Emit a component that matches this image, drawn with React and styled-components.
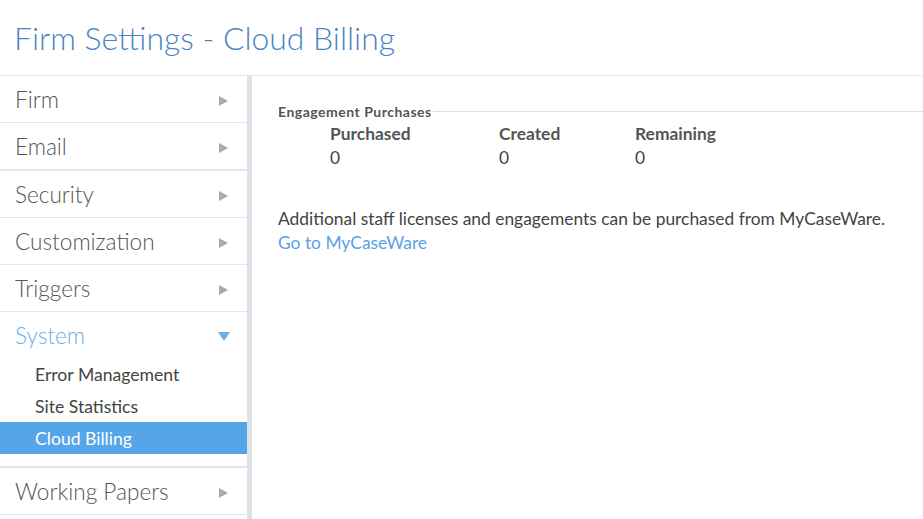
import React from 'react';
import styled, { createGlobalStyle } from 'styled-components';

const GlobalStyle = createGlobalStyle`
  html, body {
    margin: 0;
    padding: 0;
    background: #fff;
    font-family: Lato, "Open Sans", sans-serif;
    overflow: hidden;
  }
`;

const Page = styled.div`
  width: 923px;
  height: 519px;
  display: flex;
  flex-direction: column;
`;

const Header = styled.header`
  height: 76px;
  border-bottom: 1px solid #e3e6ea;
  display: flex;
  align-items: center;
  padding-left: 14px;
  box-sizing: border-box;
  flex-shrink: 0;
`;

const Title = styled.h1`
  margin: 0;
  font-weight: 300;
  font-size: 31.9px;
  color: #4a84c4;
`;

const Body = styled.div`
  flex: 1;
  display: flex;
  min-height: 0;
`;

const Sidebar = styled.nav`
  width: 247px;
  border-right: 5px solid #dde2e8;
  flex-shrink: 0;
`;

const NavRow = styled.div`
  height: 46px;
  border-bottom: ${(p) => (p.$thick ? 2 : 1)}px solid #e2e6ea;
  display: flex;
  align-items: center;
  justify-content: space-between;
  padding: 0 19px 0 15px;
  font-size: 22.6px;
  font-weight: 300;
  color: ${(p) => (p.$open ? '#6aaee8' : '#555')};
`;

const Arrow = styled.span`
  width: 0;
  height: 0;
  border-top: 5px solid transparent;
  border-bottom: 5px solid transparent;
  border-left: 9px solid #aaa;
  margin-top: 3px;
`;

const DownArrow = styled.span`
  width: 0;
  height: 0;
  border-left: 6px solid transparent;
  border-right: 6px solid transparent;
  border-top: 9px solid #6aaee8;
  margin: 3px -2px 0 0;
`;

const SystemGroup = styled.div`
  border-bottom: 2px solid #e2e6ea;
  padding-bottom: 12px;
`;

const SystemHead = styled(NavRow)`
  border-bottom: none;
`;

const SubItem = styled.div`
  height: 32px;
  display: flex;
  align-items: center;
  padding-left: 35px;
  font-size: 17.6px;
  color: ${(p) => (p.$active ? '#fff' : '#444')};
  background: ${(p) => (p.$active ? '#55a5e8' : 'transparent')};
`;

const Content = styled.main`
  flex: 1;
  padding: 27px 0 0 26px;
  color: #444;
`;

const Fieldset = styled.fieldset`
  margin: 0;
  padding: 0 0 0 52px;
  border: none;
  border-top: 1px solid #dcdfe3;
  min-width: 0;
`;

const Legend = styled.legend`
  padding: 0 1px 0 0;
  margin-left: -52px;
  font-size: 14px;
  letter-spacing: 0.5px;
  font-weight: 700;
  color: #555;
`;

const Stats = styled.div`
  display: flex;
  margin-top: 2px;
`;

const Stat = styled.div`
  width: ${(p) => p.$w}px;
  font-size: 17.4px;
  line-height: 24px;
`;

const StatLabel = styled.div`
  font-weight: 700;
  color: #555;
`;

const Note = styled.p`
  margin: 37px 0 0;
  font-size: 17.4px;
  line-height: 24px;
  color: #444;
`;

const Link = styled.a`
  color: #5ba0e6;
  text-decoration: none;
`;

const items = ['Firm', 'Email', 'Security', 'Customization', 'Triggers'];

export default function App() {
  return (
    <>
      <GlobalStyle />
      <Page>
        <Header>
          <Title>Firm Settings - Cloud Billing</Title>
        </Header>
        <Body>
          <Sidebar>
            {items.map((it) => (
              <NavRow key={it} $thick={it === 'Email'}>
                {it}
                <Arrow />
              </NavRow>
            ))}
            <SystemGroup>
              <SystemHead $open>
                System
                <DownArrow />
              </SystemHead>
              <SubItem>Error Management</SubItem>
              <SubItem>Site Statistics</SubItem>
              <SubItem $active>Cloud Billing</SubItem>
            </SystemGroup>
            <NavRow>
              Working Papers
              <Arrow />
            </NavRow>
          </Sidebar>
          <Content>
            <Fieldset>
              <Legend>Engagement Purchases</Legend>
              <Stats>
                <Stat $w={169}>
                  <StatLabel>Purchased</StatLabel>0
                </Stat>
                <Stat $w={136}>
                  <StatLabel>Created</StatLabel>0
                </Stat>
                <Stat $w={150}>
                  <StatLabel>Remaining</StatLabel>0
                </Stat>
              </Stats>
            </Fieldset>
            <Note>
              Additional staff licenses and engagements can be purchased from MyCaseWare.
              <br />
              <Link href="#">Go to MyCaseWare</Link>
            </Note>
          </Content>
        </Body>
      </Page>
    </>
  );
}
